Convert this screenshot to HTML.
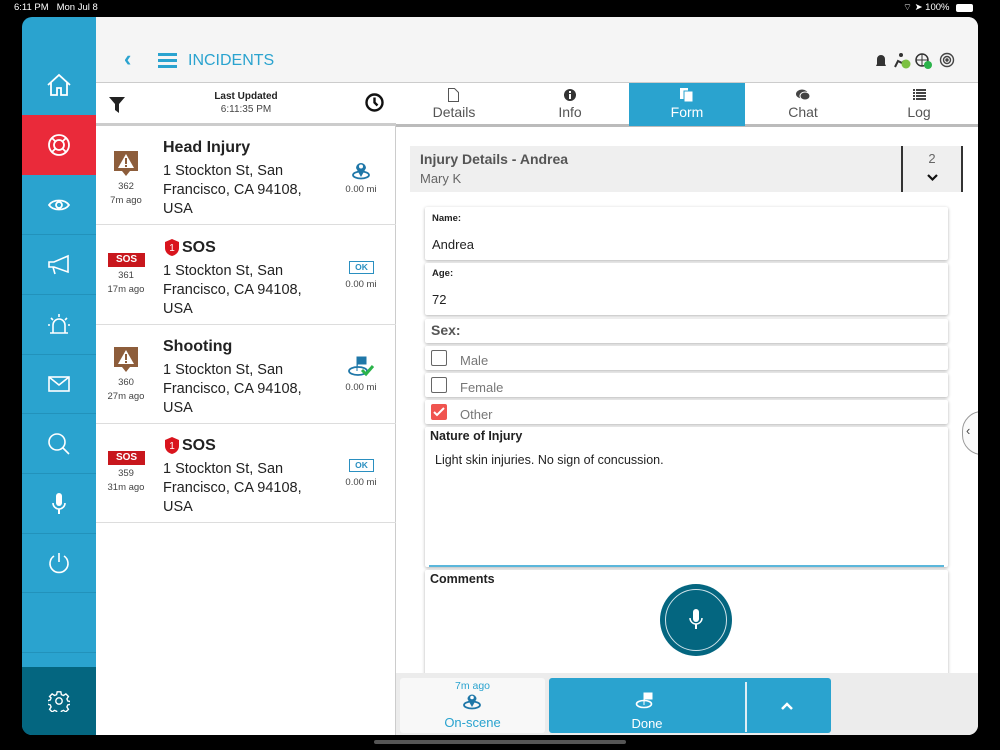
<!DOCTYPE html>
<html><head><meta charset="utf-8"><style>
*{box-sizing:border-box;margin:0;padding:0}
body{width:1000px;height:750px;background:#000;font-family:"Liberation Sans",Arial,sans-serif;position:relative;overflow:hidden}
.abs{position:absolute}
.sb{position:absolute;left:22px;top:17px;width:74px;height:718px;background:#2aa3cf;border-radius:10px 0 0 10px;overflow:hidden}
.sbi{position:absolute;left:0;width:74px;border-top:1px solid #2292bb;display:flex;align-items:center;justify-content:center}
.frame{position:absolute;left:96px;top:17px;width:882px;height:718px;background:#fff;border-radius:0 10px 10px 0;overflow:hidden}
.item{position:absolute;left:0;width:300px;height:99px;border-bottom:1px solid #ddd}
.item .t{position:absolute;left:67px;top:13px;font-size:16px;font-weight:bold;color:#222}
.item .a{position:absolute;left:67px;top:36px;font-size:14.5px;line-height:19px;color:#222}
.item .n{position:absolute;left:0;width:60px;text-align:center;font-size:9.5px;color:#444;line-height:14px}
.item .d{position:absolute;left:240px;width:50px;text-align:center;font-size:9.5px;color:#444}
.sos{position:absolute;left:12px;width:37px;height:14px;background:#c8171d;color:#fff;font-size:10px;font-weight:bold;text-align:center;line-height:14px}
.tab{position:absolute;top:66px;height:43px;width:116px;text-align:center;color:#555;font-size:14px}
.tab span{position:absolute;left:0;right:0;top:21px}
.card{position:absolute;left:329px;width:523px;background:#fff;box-shadow:0 1px 3px rgba(0,0,0,.3);border-radius:2px}
.cb{position:absolute;left:6px;top:4px;width:16px;height:16px;border:1.5px solid #666;border-radius:2px}
.cl{position:absolute;left:35px;top:7px;font-size:13px;color:#777}
</style></head><body>
<div class="abs" style="left:14px;top:2px;color:#fff;font-size:9.5px">6:11 PM&nbsp;&nbsp;&nbsp;Mon Jul 8</div>
<div class="abs" style="left:903px;top:2px;color:#fff;font-size:9.5px">⌔ ➤ 100%</div>
<div class="abs" style="left:956px;top:4px;width:17px;height:8px;background:#fff;border-radius:2px"></div>

<div class="sb">
 <div class="sbi" style="top:38px;height:60px;border:none"><svg width="26" height="24" viewBox="0 0 26 24" fill="none" stroke="#fff" stroke-width="1.8"><path d="M2 12L13 2l11 10M5 9v13h6v-7h4v7h6V9"/></svg></div>
 <div class="sbi" style="top:98px;height:60px;background:#ea2a3a;border:none"><svg width="24" height="24" viewBox="0 0 24 24" fill="none" stroke="#fff" stroke-width="1.8"><circle cx="12" cy="12" r="10"/><circle cx="12" cy="12" r="5"/><path d="M8 8L5 5M16 8l3-3M8 16l-3 3M16 16l3 3"/></svg></div>
 <div class="sbi" style="top:158px;height:59px;border:none"><svg width="22" height="14" viewBox="0 0 22 14" fill="none" stroke="#fff" stroke-width="1.8"><path d="M1 7C5 1 17 1 21 7 17 13 5 13 1 7z"/><circle cx="11" cy="7" r="3"/></svg></div>
 <div class="sbi" style="top:217px;height:60px"><svg width="24" height="22" viewBox="0 0 24 22" fill="none" stroke="#fff" stroke-width="1.6"><path d="M2 8h5l14-6v16L7 13H2zM6 13l2 7"/></svg></div>
 <div class="sbi" style="top:277px;height:60px"><svg width="24" height="24" viewBox="0 0 24 24" fill="none" stroke="#fff" stroke-width="1.6"><path d="M6 20v-8a6 6 0 0112 0v8M3 20h18M12 1v3M4 5l2 2M20 5l-2 2M1 12h2M21 12h2"/></svg></div>
 <div class="sbi" style="top:337px;height:59px"><svg width="22" height="16" viewBox="0 0 22 16" fill="none" stroke="#fff" stroke-width="1.6"><rect x="1" y="1" width="20" height="14"/><path d="M1 1l10 8 10-8"/></svg></div>
 <div class="sbi" style="top:396px;height:60px"><svg width="24" height="24" viewBox="0 0 24 24" fill="none" stroke="#fff" stroke-width="1.6"><circle cx="10" cy="10" r="8"/><path d="M16 16l6 6"/></svg></div>
 <div class="sbi" style="top:456px;height:60px"><svg width="14" height="22" viewBox="0 0 14 22" fill="#fff"><rect x="4" y="0" width="6" height="13" rx="3"/><path d="M1 10a6 6 0 0012 0" fill="none" stroke="#fff" stroke-width="1.6"/><rect x="6" y="16" width="2" height="5"/></svg></div>
 <div class="sbi" style="top:516px;height:59px"><svg width="22" height="22" viewBox="0 0 22 22" fill="none" stroke="#fff" stroke-width="1.6"><path d="M6 4a9 9 0 1010 0M11 1v9"/></svg></div>
 <div class="sbi" style="top:575px;height:60px"></div>
 <div class="sbi" style="top:635px;height:15px"></div>
 <div class="sbi" style="top:650px;height:68px;background:#046680;border:none"><svg width="22" height="22" viewBox="0 0 24 24" fill="none" stroke="#fff" stroke-width="1.5"><circle cx="12" cy="12" r="3.5"/><path d="M10 2h4l.6 3 2.3 1 2.6-1.7 2.8 2.8L20.6 9.7l1 2.3 3 .6v-1 4l-3 .6-1 2.3 1.7 2.6-2.8 2.8-2.6-1.7-2.3 1-.6 3h-4l-.6-3-2.3-1-2.6 1.7-2.8-2.8 1.7-2.6-1-2.3-3-.6v-4l3-.6 1-2.3L1.7 7.1 4.5 4.3 7.1 6l2.3-1z"/></svg></div>
</div>

<div class="frame">
 <div class="abs" style="left:300px;top:66px;width:582px;height:44px;border-bottom:3px solid #bbb;background:#fff"></div>
 <div class="abs" style="left:0;top:66px;width:300px;height:652px;border-right:1px solid #ccc">
  <div class="abs" style="left:0;top:0;width:300px;height:43px;border-bottom:3px solid #ccc;background:#fff"></div>
  <svg class="abs" style="left:13px;top:14px" width="16" height="16"><path d="M0 0h16l-6 7v9l-4-3V7z" fill="#222"/></svg>
  <div class="abs" style="left:0;width:300px;top:8px;text-align:center;font-size:10px;font-weight:bold;color:#222">Last Updated</div>
  <div class="abs" style="left:0;width:300px;top:21px;text-align:center;font-size:10px;color:#444">6:11:35 PM</div>
  <svg class="abs" style="left:269px;top:10px" width="19" height="19" fill="none" stroke="#111" stroke-width="2.4"><circle cx="9.5" cy="9.5" r="8"/><path d="M9.5 4.5v5l3 3"/></svg>

  <div class="item" style="top:43px">
   <svg class="abs" style="left:17px;top:24px" width="26" height="28"><path d="M1 1h24v20h-8l-4 5-4-5H1z" fill="#8d5d3b"/><path d="M13 4l8 14H5z" fill="#fff"/><rect x="12" y="8" width="2" height="6" fill="#8d5d3b"/><rect x="12" y="15" width="2" height="2" fill="#8d5d3b"/></svg>
   <div class="n" style="top:54px">362<br>7m ago</div>
   <div class="t">Head Injury</div>
   <div class="a">1 Stockton St, San<br>Francisco, CA 94108,<br>USA</div>
   <svg class="abs" style="left:255px;top:34px" width="20" height="20"><ellipse cx="10" cy="15" rx="8" ry="3.5" fill="none" stroke="#1f77a8" stroke-width="1.8"/><path d="M10 17L5 8a5 5 0 1110 0z" fill="#1f77a8"/><circle cx="10" cy="6.5" r="2" fill="#fff"/></svg>
   <div class="d" style="top:58px">0.00 mi</div>
  </div>
  <div class="item" style="top:143px">
   <div class="sos" style="top:27px">SOS</div>
   <div class="n" style="top:43px">361<br>17m ago</div>
   <svg class="abs" style="left:69px;top:13px" width="14" height="17"><path d="M7 0l7 3v6c0 4-3 7-7 8-4-1-7-4-7-8V3z" fill="#d9141d"/><text x="7" y="12" font-size="10" fill="#fff" text-anchor="middle" font-family="Liberation Sans">1</text></svg>
   <div class="t" style="left:86px">SOS</div>
   <div class="a">1 Stockton St, San<br>Francisco, CA 94108,<br>USA</div>
   <div class="abs" style="left:253px;top:35px;width:25px;height:13px;border:1.5px solid #2a8fc0;color:#2a8fc0;font-size:8.5px;font-weight:bold;text-align:center;line-height:10px">OK</div>
   <div class="d" style="top:53px">0.00 mi</div>
  </div>
  <div class="item" style="top:242px">
   <svg class="abs" style="left:17px;top:21px" width="26" height="28"><path d="M1 1h24v20h-8l-4 5-4-5H1z" fill="#8d5d3b"/><path d="M13 4l8 14H5z" fill="#fff"/><rect x="12" y="8" width="2" height="6" fill="#8d5d3b"/><rect x="12" y="15" width="2" height="2" fill="#8d5d3b"/></svg>
   <div class="n" style="top:51px">360<br>27m ago</div>
   <div class="t">Shooting</div>
   <div class="a">1 Stockton St, San<br>Francisco, CA 94108,<br>USA</div>
   <svg class="abs" style="left:251px;top:30px" width="28" height="22"><ellipse cx="11" cy="16" rx="9" ry="4" fill="none" stroke="#1f77a8" stroke-width="1.8"/><path d="M10 16V2h9v7h-8" fill="#1f77a8" stroke="#1f77a8"/><path d="M15 15l4 4 7-8" stroke="#2bb34a" stroke-width="3" fill="none"/></svg>
   <div class="d" style="top:57px">0.00 mi</div>
  </div>
  <div class="item" style="top:341px">
   <div class="sos" style="top:27px">SOS</div>
   <div class="n" style="top:43px">359<br>31m ago</div>
   <svg class="abs" style="left:69px;top:13px" width="14" height="17"><path d="M7 0l7 3v6c0 4-3 7-7 8-4-1-7-4-7-8V3z" fill="#d9141d"/><text x="7" y="12" font-size="10" fill="#fff" text-anchor="middle" font-family="Liberation Sans">1</text></svg>
   <div class="t" style="left:86px">SOS</div>
   <div class="a">1 Stockton St, San<br>Francisco, CA 94108,<br>USA</div>
   <div class="abs" style="left:253px;top:35px;width:25px;height:13px;border:1.5px solid #2a8fc0;color:#2a8fc0;font-size:8.5px;font-weight:bold;text-align:center;line-height:10px">OK</div>
   <div class="d" style="top:53px">0.00 mi</div>
  </div>
 </div>

 <div class="tab" style="left:300px"><svg class="abs" style="left:52px;top:5px" width="11" height="14" fill="none" stroke="#555"><path d="M.5.5h6l4 4v9H.5z"/></svg><span>Details</span></div>
 <div class="tab" style="left:416px"><svg class="abs" style="left:52px;top:6px" width="12" height="12"><circle cx="6" cy="6" r="6" fill="#333"/><rect x="5" y="5" width="2" height="5" fill="#fff"/><rect x="5" y="2" width="2" height="2" fill="#fff"/></svg><span>Info</span></div>
 <div class="tab" style="left:533px;width:116px;height:43px;background:#2aa3cf;color:#fff"><svg class="abs" style="left:51px;top:5px" width="13" height="14"><rect x="0" y="0" width="8" height="11" fill="#fff"/><rect x="4" y="3" width="9" height="11" fill="#fff" stroke="#2aa3cf"/></svg><span>Form</span></div>
 <div class="tab" style="left:649px"><svg class="abs" style="left:51px;top:6px" width="14" height="12"><ellipse cx="6" cy="5" rx="6" ry="4.5" fill="#444"/><ellipse cx="9" cy="7" rx="5" ry="4" fill="#444" stroke="#fff"/></svg><span>Chat</span></div>
 <div class="tab" style="left:765px"><svg class="abs" style="left:52px;top:6px" width="13" height="11" fill="#444"><rect width="2" height="2"/><rect x="3" width="10" height="2"/><rect y="3" width="2" height="2"/><rect x="3" y="3" width="10" height="2"/><rect y="6" width="2" height="2"/><rect x="3" y="6" width="10" height="2"/><rect y="9" width="2" height="2"/><rect x="3" y="9" width="10" height="2"/></svg><span>Log</span></div>

 <div class="abs" style="left:314px;top:129px;width:553px;height:46px;background:#efefef"></div>
 <div class="abs" style="left:324px;top:134px;font-size:14px;font-weight:bold;color:#555">Injury Details - Andrea</div>
 <div class="abs" style="left:324px;top:154px;font-size:13px;color:#666">Mary K</div>
 <div class="abs" style="left:805px;top:129px;width:62px;height:46px;border-left:2px solid #333;border-right:2px solid #333"></div>
 <div class="abs" style="left:806px;top:134px;width:60px;text-align:center;font-size:13px;color:#666">2</div>
 <svg class="abs" style="left:831px;top:157px" width="11" height="8" fill="none" stroke="#111" stroke-width="2.2"><path d="M1 1l4.5 4.5L10 1"/></svg>

 <div class="card" style="top:190px;height:53px"><div class="abs" style="left:7px;top:6px;font-size:9.5px;font-weight:bold;color:#222">Name:</div><div class="abs" style="left:7px;top:30px;font-size:13px;color:#222">Andrea</div></div>
 <div class="card" style="top:246px;height:52px"><div class="abs" style="left:7px;top:5px;font-size:9.5px;font-weight:bold;color:#222">Age:</div><div class="abs" style="left:7px;top:29px;font-size:13px;color:#222">72</div></div>
 <div class="card" style="top:302px;height:24px"><div class="abs" style="left:6px;top:3px;font-size:14px;font-weight:bold;color:#555">Sex:</div></div>
 <div class="card" style="top:329px;height:24px"><div class="cb"></div><div class="cl">Male</div></div>
 <div class="card" style="top:356px;height:24px"><div class="cb"></div><div class="cl">Female</div></div>
 <div class="card" style="top:383px;height:24px"><div class="cb" style="background:#f0544f;border-color:#f0544f"><svg width="14" height="13" style="position:absolute;left:0;top:0" fill="none" stroke="#fff" stroke-width="2"><path d="M2 7l3 3 7-7"/></svg></div><div class="cl">Other</div></div>
 <div class="card" style="top:410px;height:140px"><div class="abs" style="left:5px;top:2px;font-size:12.5px;font-weight:bold;color:#222">Nature of Injury</div><div class="abs" style="left:10px;top:26px;font-size:12.5px;color:#222">Light skin injuries. No sign of concussion.</div><div class="abs" style="left:4px;right:4px;bottom:0;height:2px;background:#5bb7db"></div></div>
 <div class="card" style="top:553px;height:180px"><div class="abs" style="left:5px;top:2px;font-size:12.5px;font-weight:bold;color:#222">Comments</div></div>
 <div class="abs" style="left:564px;top:567px;width:72px;height:72px;border-radius:50%;background:#046680"></div>
 <div class="abs" style="left:569px;top:572px;width:62px;height:62px;border-radius:50%;border:1.5px solid #cfe3ea"></div>
 <svg class="abs" style="left:592px;top:592px" width="16" height="22" fill="#fff"><rect x="5" y="0" width="6" height="13" rx="3"/><path d="M2 9a6 6 0 0012 0" fill="none" stroke="#fff" stroke-width="1.5"/><rect x="7" y="15" width="2" height="5"/></svg>
 <div class="abs" style="left:866px;top:394px;width:40px;height:44px;border:1px solid #999;border-radius:20px;background:#fafafa"></div>
 <div class="abs" style="left:870px;top:406px;font-size:13px;color:#444">‹</div>

 <div class="abs" style="left:300px;top:656px;width:582px;height:62px;background:#ececec"></div>
 <div class="abs" style="left:304px;top:661px;width:145px;height:55px;background:#f8f8f8;border-radius:3px"></div>
 <div class="abs" style="left:304px;top:663px;width:145px;text-align:center;font-size:10.5px;color:#2aa3cf">7m ago</div>
 <svg class="abs" style="left:366px;top:675px" width="20" height="18"><ellipse cx="10" cy="13" rx="8" ry="3.5" fill="none" stroke="#1f77a8" stroke-width="1.8"/><path d="M10 15L5.5 7a4.5 4.5 0 119 0z" fill="#1f77a8"/><circle cx="10" cy="5.5" r="1.8" fill="#fff"/></svg>
 <div class="abs" style="left:304px;top:698px;width:145px;text-align:center;font-size:13px;color:#2aa3cf">On-scene</div>
 <div class="abs" style="left:453px;top:661px;width:282px;height:55px;background:#2aa3cf;border-radius:3px"></div>
 <div class="abs" style="left:649px;top:665px;width:1.5px;height:50px;background:#dfeef5"></div>
 <svg class="abs" style="left:539px;top:674px" width="20" height="18"><ellipse cx="9" cy="13" rx="7.5" ry="3.5" fill="none" stroke="#fff" stroke-width="1.6"/><path d="M9 14V2h8v6h-7" fill="#fff" stroke="#fff"/></svg>
 <div class="abs" style="left:453px;top:699px;width:196px;text-align:center;font-size:13px;color:#fff">Done</div>
 <svg class="abs" style="left:685px;top:685px" width="12" height="9" fill="none" stroke="#fff" stroke-width="2.5"><path d="M1 7l5-5 5 5"/></svg>
</div>

<!-- header drawn at body level -->
<div class="abs" style="left:96px;top:17px;width:882px;height:66px;background:#f5f5f5;border-bottom:1px solid #ccc;border-top-right-radius:10px;z-index:5"></div>
<div class="abs" style="left:124px;top:49px;color:#2aa3cf;font-size:22px;font-weight:bold;line-height:20px;z-index:6">‹</div>
<svg class="abs" style="left:158px;top:53px;z-index:6" width="19" height="15"><rect width="19" height="3" fill="#2aa3cf"/><rect y="6" width="19" height="3" fill="#2aa3cf"/><rect y="12" width="19" height="3" fill="#2aa3cf"/></svg>
<div class="abs" style="left:188px;top:52px;color:#2aa3cf;font-size:16px;z-index:6">INCIDENTS</div>
<svg class="abs" style="left:873px;top:52px;z-index:6" width="64" height="18"><path d="M4 12V7a4 4 0 018 0v5l1 2H3z M7 15h2" fill="#333"/><circle cx="28" cy="3" r="2" fill="#333"/><path d="M22 15l3-6 4 2 2-2" stroke="#333" stroke-width="2" fill="none"/><circle cx="33" cy="12" r="4.5" fill="#7cc142"/><circle cx="49" cy="8" r="6" fill="none" stroke="#333" stroke-width="1.5"/><path d="M43 8h12M49 2v12" stroke="#333"/><circle cx="55" cy="13" r="4" fill="#2bb34a"/></svg>
<svg class="abs" style="left:939px;top:52px;z-index:6" width="16" height="16" fill="none" stroke="#444" stroke-width="1.4"><circle cx="8" cy="8" r="6.5"/><circle cx="8" cy="8" r="3.5"/><circle cx="8" cy="8" r="1" fill="#444"/></svg>
<div class="abs" style="left:374px;top:740px;width:252px;height:4px;border-radius:2px;background:#555"></div>
</body></html>
